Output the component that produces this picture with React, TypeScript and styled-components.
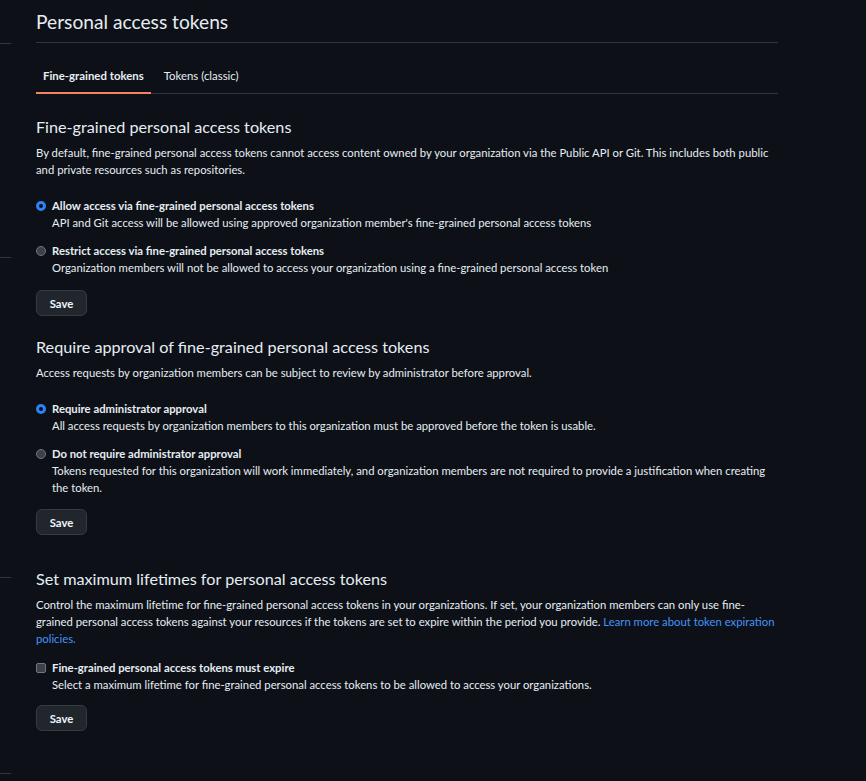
import React from "react";
import styled, { createGlobalStyle } from "styled-components";

const Global = createGlobalStyle`
  html, body { margin: 0; padding: 0; background: #0d1117; }
  body {
    font-family: Lato, "Noto Sans", "Liberation Sans", sans-serif;
    color: #e6edf3;
    -webkit-font-smoothing: antialiased;
  }
`;

const Layout = styled.div`
  display: grid;
  grid-template-columns: 11px 742px;
  column-gap: 25px;
  min-height: 781px;
`;

const Sidebar = styled.div`
  display: flex;
  flex-direction: column;
`;

const SideRule = styled.div<{ $top: number }>`
  margin-top: ${(p) => p.$top}px;
  height: 1px;
  background: #30363d;
`;

const Main = styled.main`
  display: flex;
  flex-direction: column;
`;

const PageTitle = styled.h1`
  margin: 7px 0 0;
  padding-bottom: 5px;
  font-size: 19.2px;
  line-height: 30px;
  font-weight: 400;
  border-bottom: 1px solid #30363d;
`;

const TabBar = styled.nav`
  display: flex;
  margin-top: 16px;
  border-bottom: 1px solid #30363d;
`;

const Tab = styled.a<{ $active?: boolean }>`
  display: flex;
  align-items: center;
  height: 35px;
  padding: 0 7px;
  margin-right: 6px;
  font-size: 11.4px;
  font-weight: ${(p) => (p.$active ? 700 : 400)};
  color: #e6edf3;
  text-decoration: none;
  box-sizing: border-box;
  border-bottom: 2px solid ${(p) => (p.$active ? "#f78166" : "transparent")};
  margin-bottom: -1px;
`;

const Section = styled.section<{ $top: number }>`
  display: flex;
  flex-direction: column;
  align-items: flex-start;
  margin-top: ${(p) => p.$top}px;
`;

const Heading = styled.h2`
  margin: 0;
  font-size: 16.2px;
  line-height: 24px;
  font-weight: 400;
`;

const Desc = styled.p`
  margin: 5px 0 0;
  font-size: 11.3px;
  line-height: 17px;
`;

const Link = styled.a`
  color: #4493f8;
  text-decoration: none;
`;

const Options = styled.div<{ $top: number }>`
  display: flex;
  flex-direction: column;
  gap: 11px;
  margin-top: ${(p) => p.$top}px;
`;

const Option = styled.label`
  display: grid;
  grid-template-columns: 16px 1fr;
  font-size: 11.3px;
  line-height: 17px;
  cursor: pointer;
`;

const OptionTitle = styled.span`
  font-weight: 700;
`;

const OptionHint = styled.span`
  grid-column: 2;
  display: block;
`;

const RadioDot = styled.span<{ $checked?: boolean }>`
  width: 10px;
  height: 10px;
  margin-top: 3.5px;
  border-radius: 50%;
  box-sizing: border-box;
  ${(p) =>
    p.$checked
      ? "border: 3px solid #2f81f7; background: #0d1117;"
      : "border: 1px solid #6e7681; background: #3d4147;"}
`;

const CheckBox = styled.span`
  width: 10px;
  height: 10px;
  margin-top: 3.5px;
  border-radius: 2px;
  box-sizing: border-box;
  border: 1px solid #6e7681;
  background: #3d4147;
`;

const SaveButton = styled.button<{ $top: number }>`
  margin-top: ${(p) => p.$top}px;
  height: 26px;
  width: 51px;
  padding: 0;
  border-radius: 6px;
  border: 1px solid #363b42;
  background: #21262d;
  color: #f0f6fc;
  font-family: inherit;
  font-size: 11.3px;
  font-weight: 700;
  cursor: pointer;
`;

export default function App() {
  return (
    <>
      <Global />
      <Layout>
        <Sidebar>
          <SideRule $top={43} />
          <SideRule $top={213} />
          <SideRule $top={319} />
          <SideRule $top={195} />
        </Sidebar>
        <Main>
          <PageTitle>Personal access tokens</PageTitle>
          <TabBar>
            <Tab $active href="#">Fine-grained tokens</Tab>
            <Tab href="#">Tokens (classic)</Tab>
          </TabBar>

          <Section $top={21}>
            <Heading>Fine-grained personal access tokens</Heading>
            <Desc>
              By default, fine-grained personal access tokens cannot access content owned by your
              organization via the Public API or Git. This includes both public and private
              resources such as repositories.
            </Desc>
            <Options $top={19}>
              <Option>
                <RadioDot $checked />
                <OptionTitle>Allow access via fine-grained personal access tokens</OptionTitle>
                <OptionHint>
                  API and Git access will be allowed using approved organization member's
                  fine-grained personal access tokens
                </OptionHint>
              </Option>
              <Option>
                <RadioDot />
                <OptionTitle>Restrict access via fine-grained personal access tokens</OptionTitle>
                <OptionHint>
                  Organization members will not be allowed to access your organization using a
                  fine-grained personal access token
                </OptionHint>
              </Option>
            </Options>
            <SaveButton $top={14}>Save</SaveButton>
          </Section>

          <Section $top={19}>
            <Heading>Require approval of fine-grained personal access tokens</Heading>
            <Desc>
              Access requests by organization members can be subject to review by administrator
              before approval.
            </Desc>
            <Options $top={19}>
              <Option>
                <RadioDot $checked />
                <OptionTitle>Require administrator approval</OptionTitle>
                <OptionHint>
                  All access requests by organization members to this organization must be approved
                  before the token is usable.
                </OptionHint>
              </Option>
              <Option>
                <RadioDot />
                <OptionTitle>Do not require administrator approval</OptionTitle>
                <OptionHint>
                  Tokens requested for this organization will work immediately, and organization
                  members are not required to provide a justification when creating the token.
                </OptionHint>
              </Option>
            </Options>
            <SaveButton $top={13}>Save</SaveButton>
          </Section>

          <Section $top={32}>
            <Heading>Set maximum lifetimes for personal access tokens</Heading>
            <Desc>
              Control the maximum lifetime for fine-grained personal access tokens in your
              organizations. If set, your organization members can only use fine-grained personal
              access tokens against your resources if the tokens are set to expire within the
              period you provide. <Link href="#">Learn more about token expiration policies.</Link>
            </Desc>
            <Options $top={12}>
              <Option>
                <CheckBox />
                <OptionTitle>Fine-grained personal access tokens must expire</OptionTitle>
                <OptionHint>
                  Select a maximum lifetime for fine-grained personal access tokens to be allowed to
                  access your organizations.
                </OptionHint>
              </Option>
            </Options>
            <SaveButton $top={12}>Save</SaveButton>
          </Section>
        </Main>
      </Layout>
    </>
  );
}
